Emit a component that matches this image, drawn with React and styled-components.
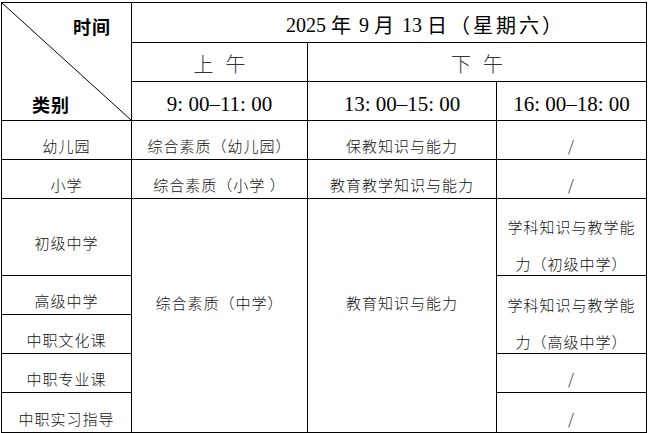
import React from 'react';
import styled, { createGlobalStyle } from 'styled-components';

const GlobalStyle = createGlobalStyle`
    html, body {
        margin: 0;
        padding: 0;
        background: #ffffff;
    }
    body {
        font-family: "Noto Sans CJK SC", sans-serif;
        color: #000000;
    }
`;

const Table = styled.div`
    display: grid;
    grid-template-columns: 130px 176px 189px 150px;
    grid-template-rows: 40px 39px 39px 39px 39px 38px 39px 39px 39px 39px 40px;
    width: max-content;
    margin: 2px 0 0 1px;
    border-top: 1px solid #000;
    border-left: 1px solid #000;
`;

const Cell = styled.div`
    grid-column: ${p => p.$col};
    grid-row: ${p => p.$row};
    box-sizing: border-box;
    border-right: 1px solid #000;
    border-bottom: 1px solid #000;
    display: flex;
    align-items: center;
    justify-content: center;
    text-align: center;
    padding-top: ${p => p.$top || 0}px;
    padding-bottom: ${p => p.$bottom || 0}px;
    font-family: "Noto Sans CJK SC", sans-serif;
    font-size: 15px;
    font-weight: 300;
    letter-spacing: 1px;
    line-height: ${p => p.$lh || 20}px;
    color: #111;
    white-space: nowrap;
`;

const Corner = styled.div`
    grid-column: 1;
    grid-row: 1 / 4;
    position: relative;
    box-sizing: border-box;
    border-right: 1px solid #000;
    border-bottom: 1px solid #000;
    display: flex;
    flex-direction: column;
    justify-content: space-between;
    padding: 11px 20px 4px 30px;
    font-family: "Noto Sans CJK SC", sans-serif;
    font-size: 18px;
    font-weight: 700;
    letter-spacing: 1px;
    line-height: 24px;

    .time {
        align-self: flex-end;
    }
    .kind {
        align-self: flex-start;
    }

    svg {
        position: absolute;
        inset: 0;
        width: 100%;
        height: 100%;
    }
`;

const DateCell = styled(Cell)`
    justify-content: flex-start;
    padding-left: 154px;
    font-size: 20px;
    font-weight: 400;
    letter-spacing: 3px;
    color: #000;
`;

const Num = styled.span`
    font-family: "Liberation Serif", serif;
    letter-spacing: 0;
    margin: 0 ${p => (p.$last ? 5 : 5)}px 0 ${p => (p.$first ? 0 : 5)}px;
`;

const HalfDay = styled(Cell)`
    gap: 12px;
    font-size: 20px;
    letter-spacing: 0;
    color: #333;
`;

const TimeCell = styled(Cell)`
    font-family: "Liberation Serif", serif;
    font-size: 21px;
    font-weight: 400;
    letter-spacing: 0;
    color: #000;
`;

const Diagonal = () => (
    <svg viewBox="0 0 100 100" preserveAspectRatio="none">
        <line x1="0" y1="0" x2="100" y2="100" stroke="#000" strokeWidth="1" vectorEffect="non-scaling-stroke" />
    </svg>
);

const categories = [
    { name: '幼儿园', row: '4' },
    { name: '小学', row: '5' },
    { name: '初级中学', row: '6 / 8' },
    { name: '高级中学', row: '8' },
    { name: '中职文化课', row: '9' },
    { name: '中职专业课', row: '10' },
    { name: '中职实习指导', row: '11' },
];

const App = () => {
    return (
        <>
            <GlobalStyle />
            <Table>
                <Corner>
                    <Diagonal />
                    <span className='time'>时间</span>
                    <span className='kind'>类别</span>
                </Corner>

                <DateCell $col='2 / 5' $row='1' $top={5}>
                    <Num $first>2025</Num>年<Num>9</Num>月<Num>13</Num>日（星期六）
                </DateCell>

                <HalfDay $col='2' $row='2' $top={4}><span>上</span><span>午</span></HalfDay>
                <HalfDay $col='3 / 5' $row='2' $top={4}><span>下</span><span>午</span></HalfDay>

                <TimeCell $col='2' $row='3' $top={6}>9: 00–11: 00</TimeCell>
                <TimeCell $col='3' $row='3' $top={6}>13: 00–15: 00</TimeCell>
                <TimeCell $col='4' $row='3' $top={6}>16: 00–18: 00</TimeCell>

                {categories.map(c => (
                    <Cell key={c.name} $col='1' $row={c.row} $top={12}>{c.name}</Cell>
                ))}

                <Cell $col='2' $row='4' $top={12}>综合素质（幼儿园）</Cell>
                <Cell $col='3' $row='4' $top={12}>保教知识与能力</Cell>
                <Cell $col='4' $row='4' $top={12}>/</Cell>

                <Cell $col='2' $row='5' $top={12}>综合素质（小学 ）</Cell>
                <Cell $col='3' $row='5' $top={12}>教育教学知识与能力</Cell>
                <Cell $col='4' $row='5' $top={12}>/</Cell>

                <Cell $col='2' $row='6 / 12' $bottom={25}>综合素质（中学）</Cell>
                <Cell $col='3' $row='6 / 12' $bottom={25}>教育知识与能力</Cell>

                <Cell $col='4' $row='6 / 8' $top={16} $lh={37}>学科知识与教学能<br />力（初级中学）</Cell>
                <Cell $col='4' $row='8 / 10' $top={16} $lh={37}>学科知识与教学能<br />力（高级中学）</Cell>
                <Cell $col='4' $row='10' $top={12}>/</Cell>
                <Cell $col='4' $row='11' $top={12}>/</Cell>
            </Table>
        </>
    );
};

export default App;
